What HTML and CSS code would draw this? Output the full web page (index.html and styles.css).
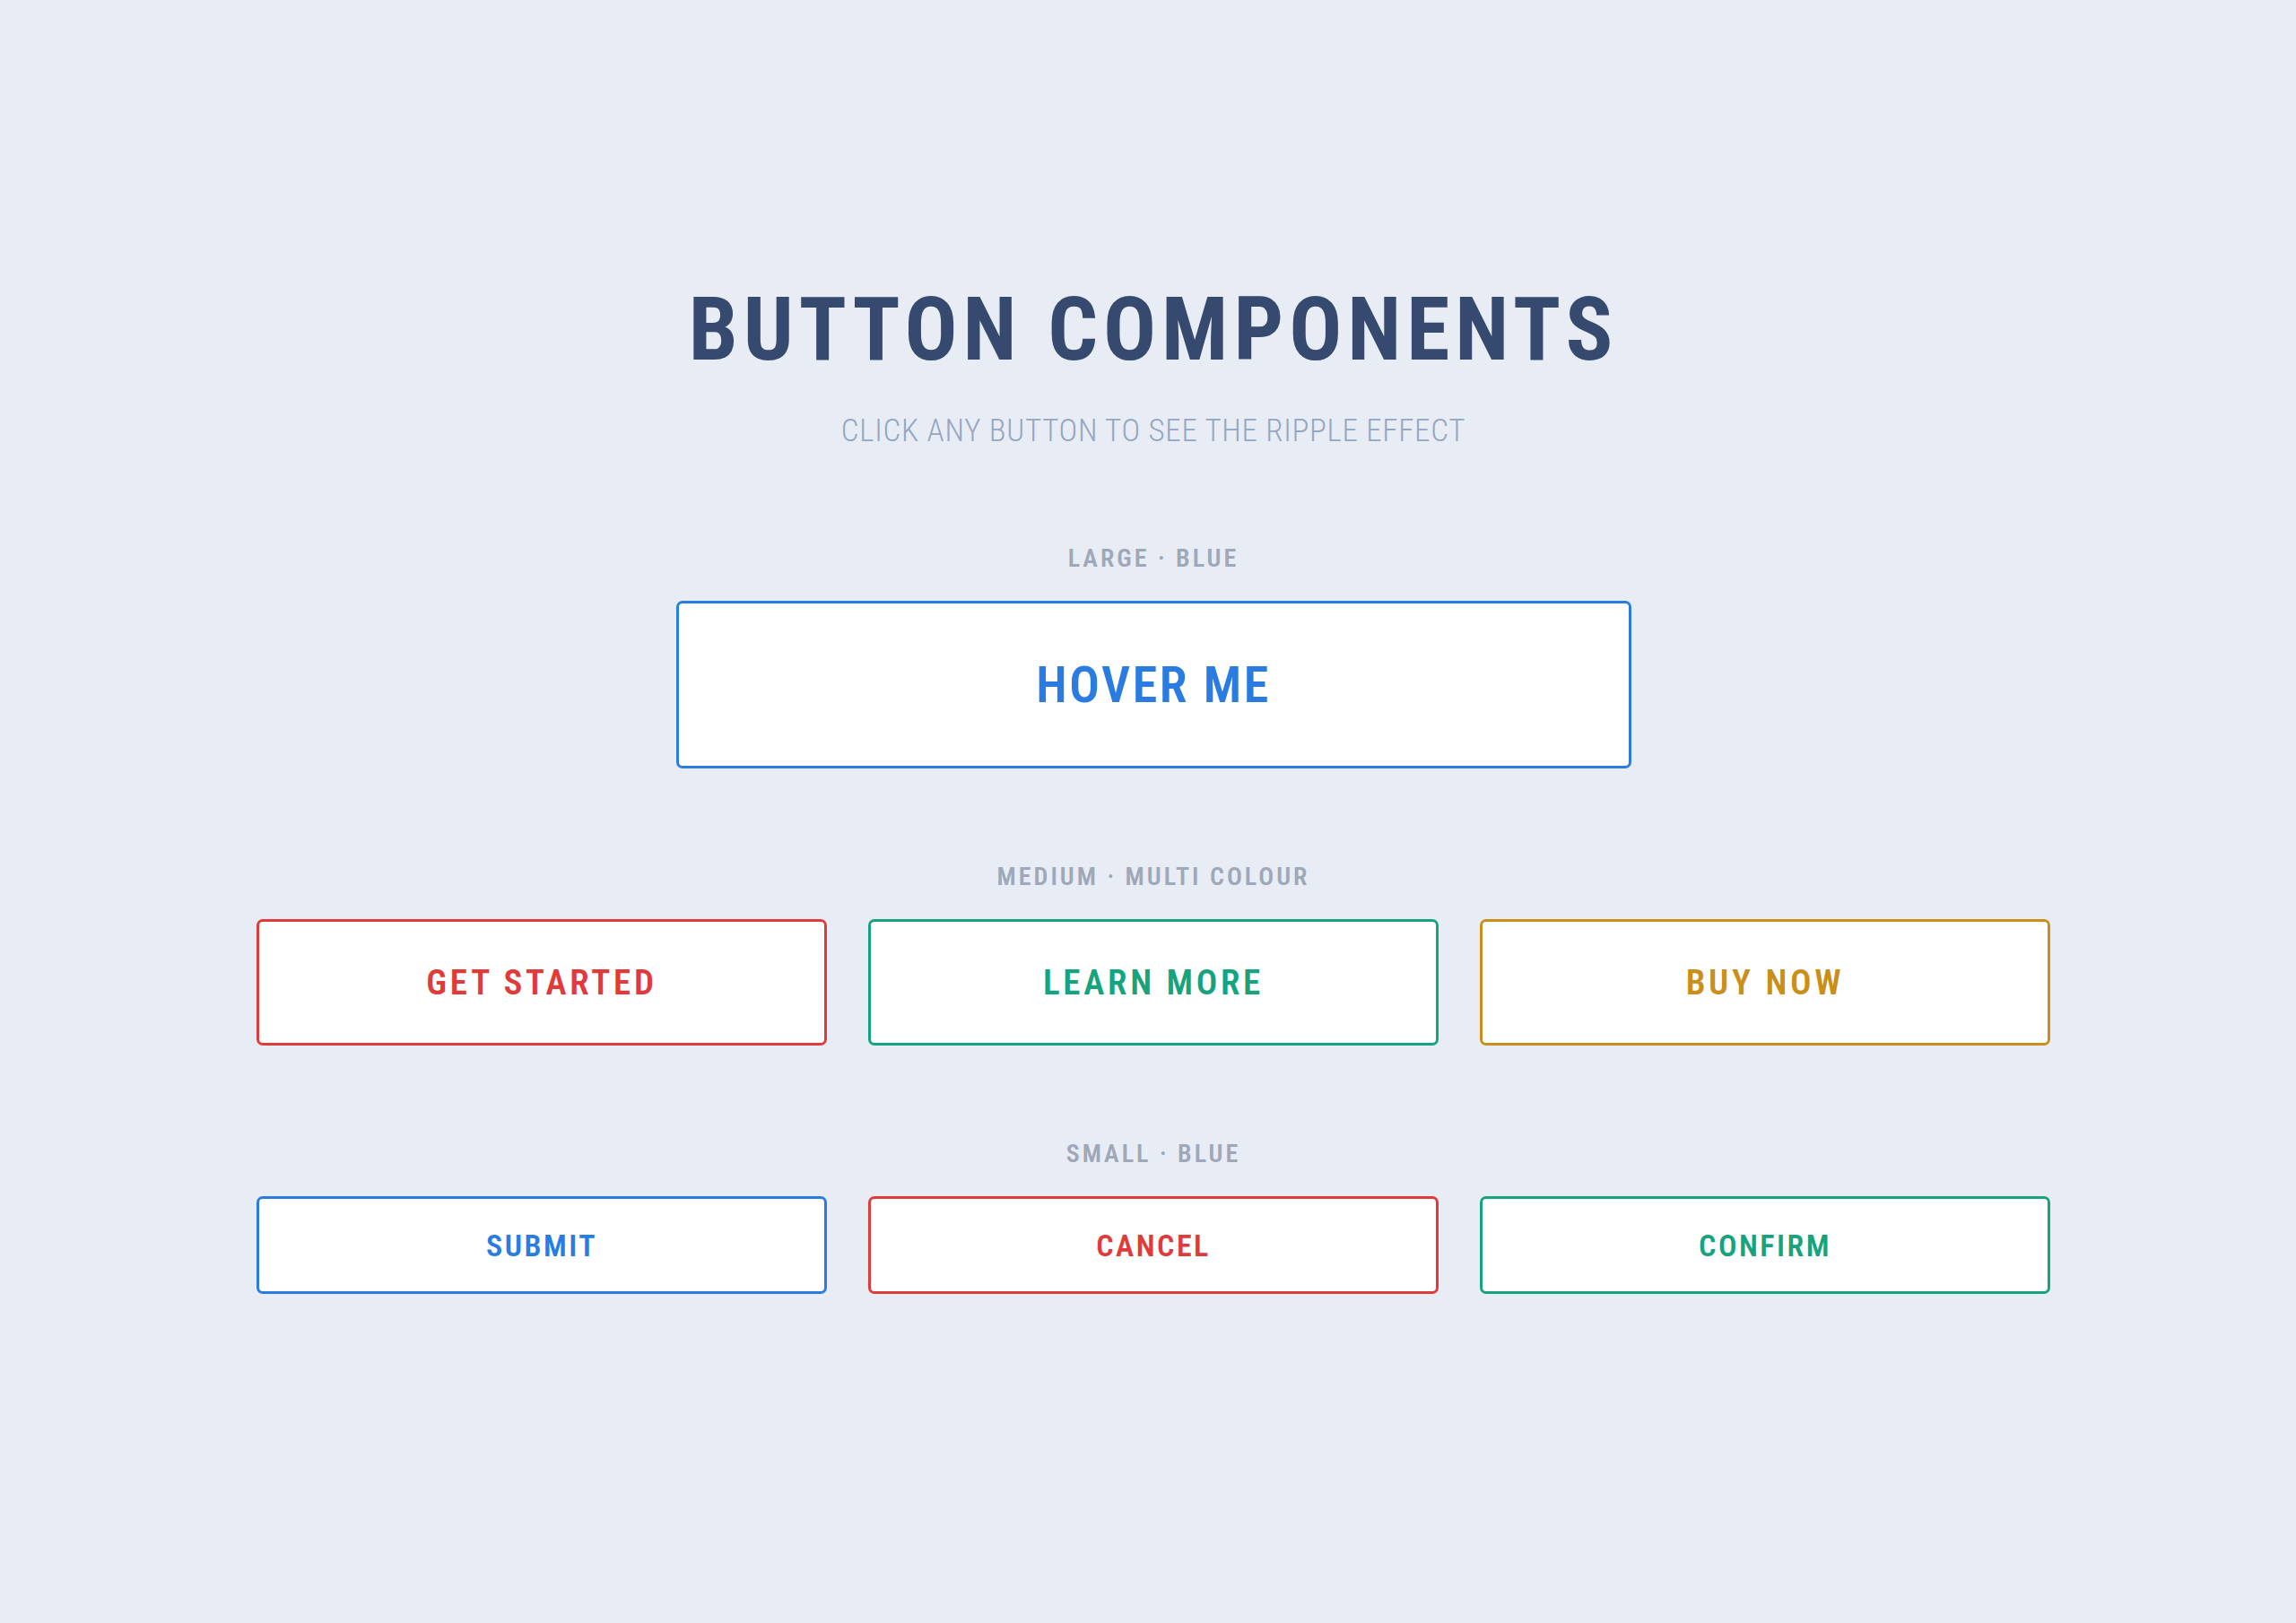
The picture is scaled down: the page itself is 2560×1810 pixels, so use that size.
FILE: index.html
```html
<!DOCTYPE html>
<html lang="en">
<head>
    <meta charset="UTF-8">
    <meta name="viewport" content="width=device-width, initial-scale=1.0">
    <title>Button Components</title>
    <link rel="stylesheet" href="styles.css">
</head>
<body>
    <main class="page">
        <h1 class="title">Button Components</h1>
        <p class="subtitle">Click any button to see the ripple effect</p>

        <section class="group">
            <div class="group-label">Large &middot; Blue</div>
            <div class="row-single">
                <button class="btn btn-lg btn-blue">Hover Me</button>
            </div>
        </section>

        <section class="group">
            <div class="group-label">Medium &middot; Multi Colour</div>
            <div class="row">
                <button class="btn btn-md btn-red">Get Started</button>
                <button class="btn btn-md btn-green">Learn More</button>
                <button class="btn btn-md btn-gold">Buy Now</button>
            </div>
        </section>

        <section class="group">
            <div class="group-label">Small &middot; Blue</div>
            <div class="row">
                <button class="btn btn-sm btn-blue">Submit</button>
                <button class="btn btn-sm btn-red">Cancel</button>
                <button class="btn btn-sm btn-green">Confirm</button>
            </div>
        </section>
    </main>
</body>
</html>
```

FILE: styles.css
```css
body {
    margin: 0;
    padding: 0 0 0 12px;
    background-color: #e8ecf4;
    font-family: Roboto, "Open Sans", sans-serif;
    font-stretch: 75%;
    text-transform: uppercase;
}
.page {
    width: 2000px;
    margin: 0 auto;
    padding-top: 319px;
    text-align: center;
}
.title {
    margin: 0;
    font-size: 98px;
    line-height: 98px;
    font-weight: 700;
    letter-spacing: 6px;
    color: #354a6e;
}
.subtitle {
    margin: 46px 0 0;
    font-size: 35px;
    line-height: 35px;
    font-weight: 350;
    letter-spacing: 0.7px;
    color: #94a6c0;
}
.group {
    margin-top: 107px;
}
.subtitle + .group {
    margin-top: 111px;
}
.group-label {
    font-size: 28px;
    line-height: 28px;
    font-weight: 600;
    letter-spacing: 3px;
    color: #9ea8b9;
    margin-bottom: 33px;
}
.row-single {
    display: flex;
    justify-content: center;
}
.row {
    display: grid;
    grid-template-columns: repeat(3, 1fr);
    gap: 46px;
}
.btn {
    font-family: inherit;
    font-stretch: inherit;
    text-transform: uppercase;
    font-weight: 600;
    background-color: #fff;
    border: 3px solid;
    border-radius: 7px;
    cursor: pointer;
    padding: 0;
}
.btn-lg {
    width: 1065px;
    height: 187px;
    font-size: 56px;
    letter-spacing: 2.6px;
}
.btn-md {
    height: 141px;
    font-size: 39px;
    letter-spacing: 3.7px;
}
.btn-sm {
    height: 109px;
    font-size: 34px;
    letter-spacing: 2.5px;
}
.btn-blue {
    border-color: #2a7ce1;
    color: #2a7ce1;
}
.btn-red {
    border-color: #e03a3a;
    color: #e03a3a;
}
.btn-green {
    border-color: #16a37d;
    color: #16a37d;
}
.btn-gold {
    border-color: #c98f1a;
    color: #c98f1a;
}
```
